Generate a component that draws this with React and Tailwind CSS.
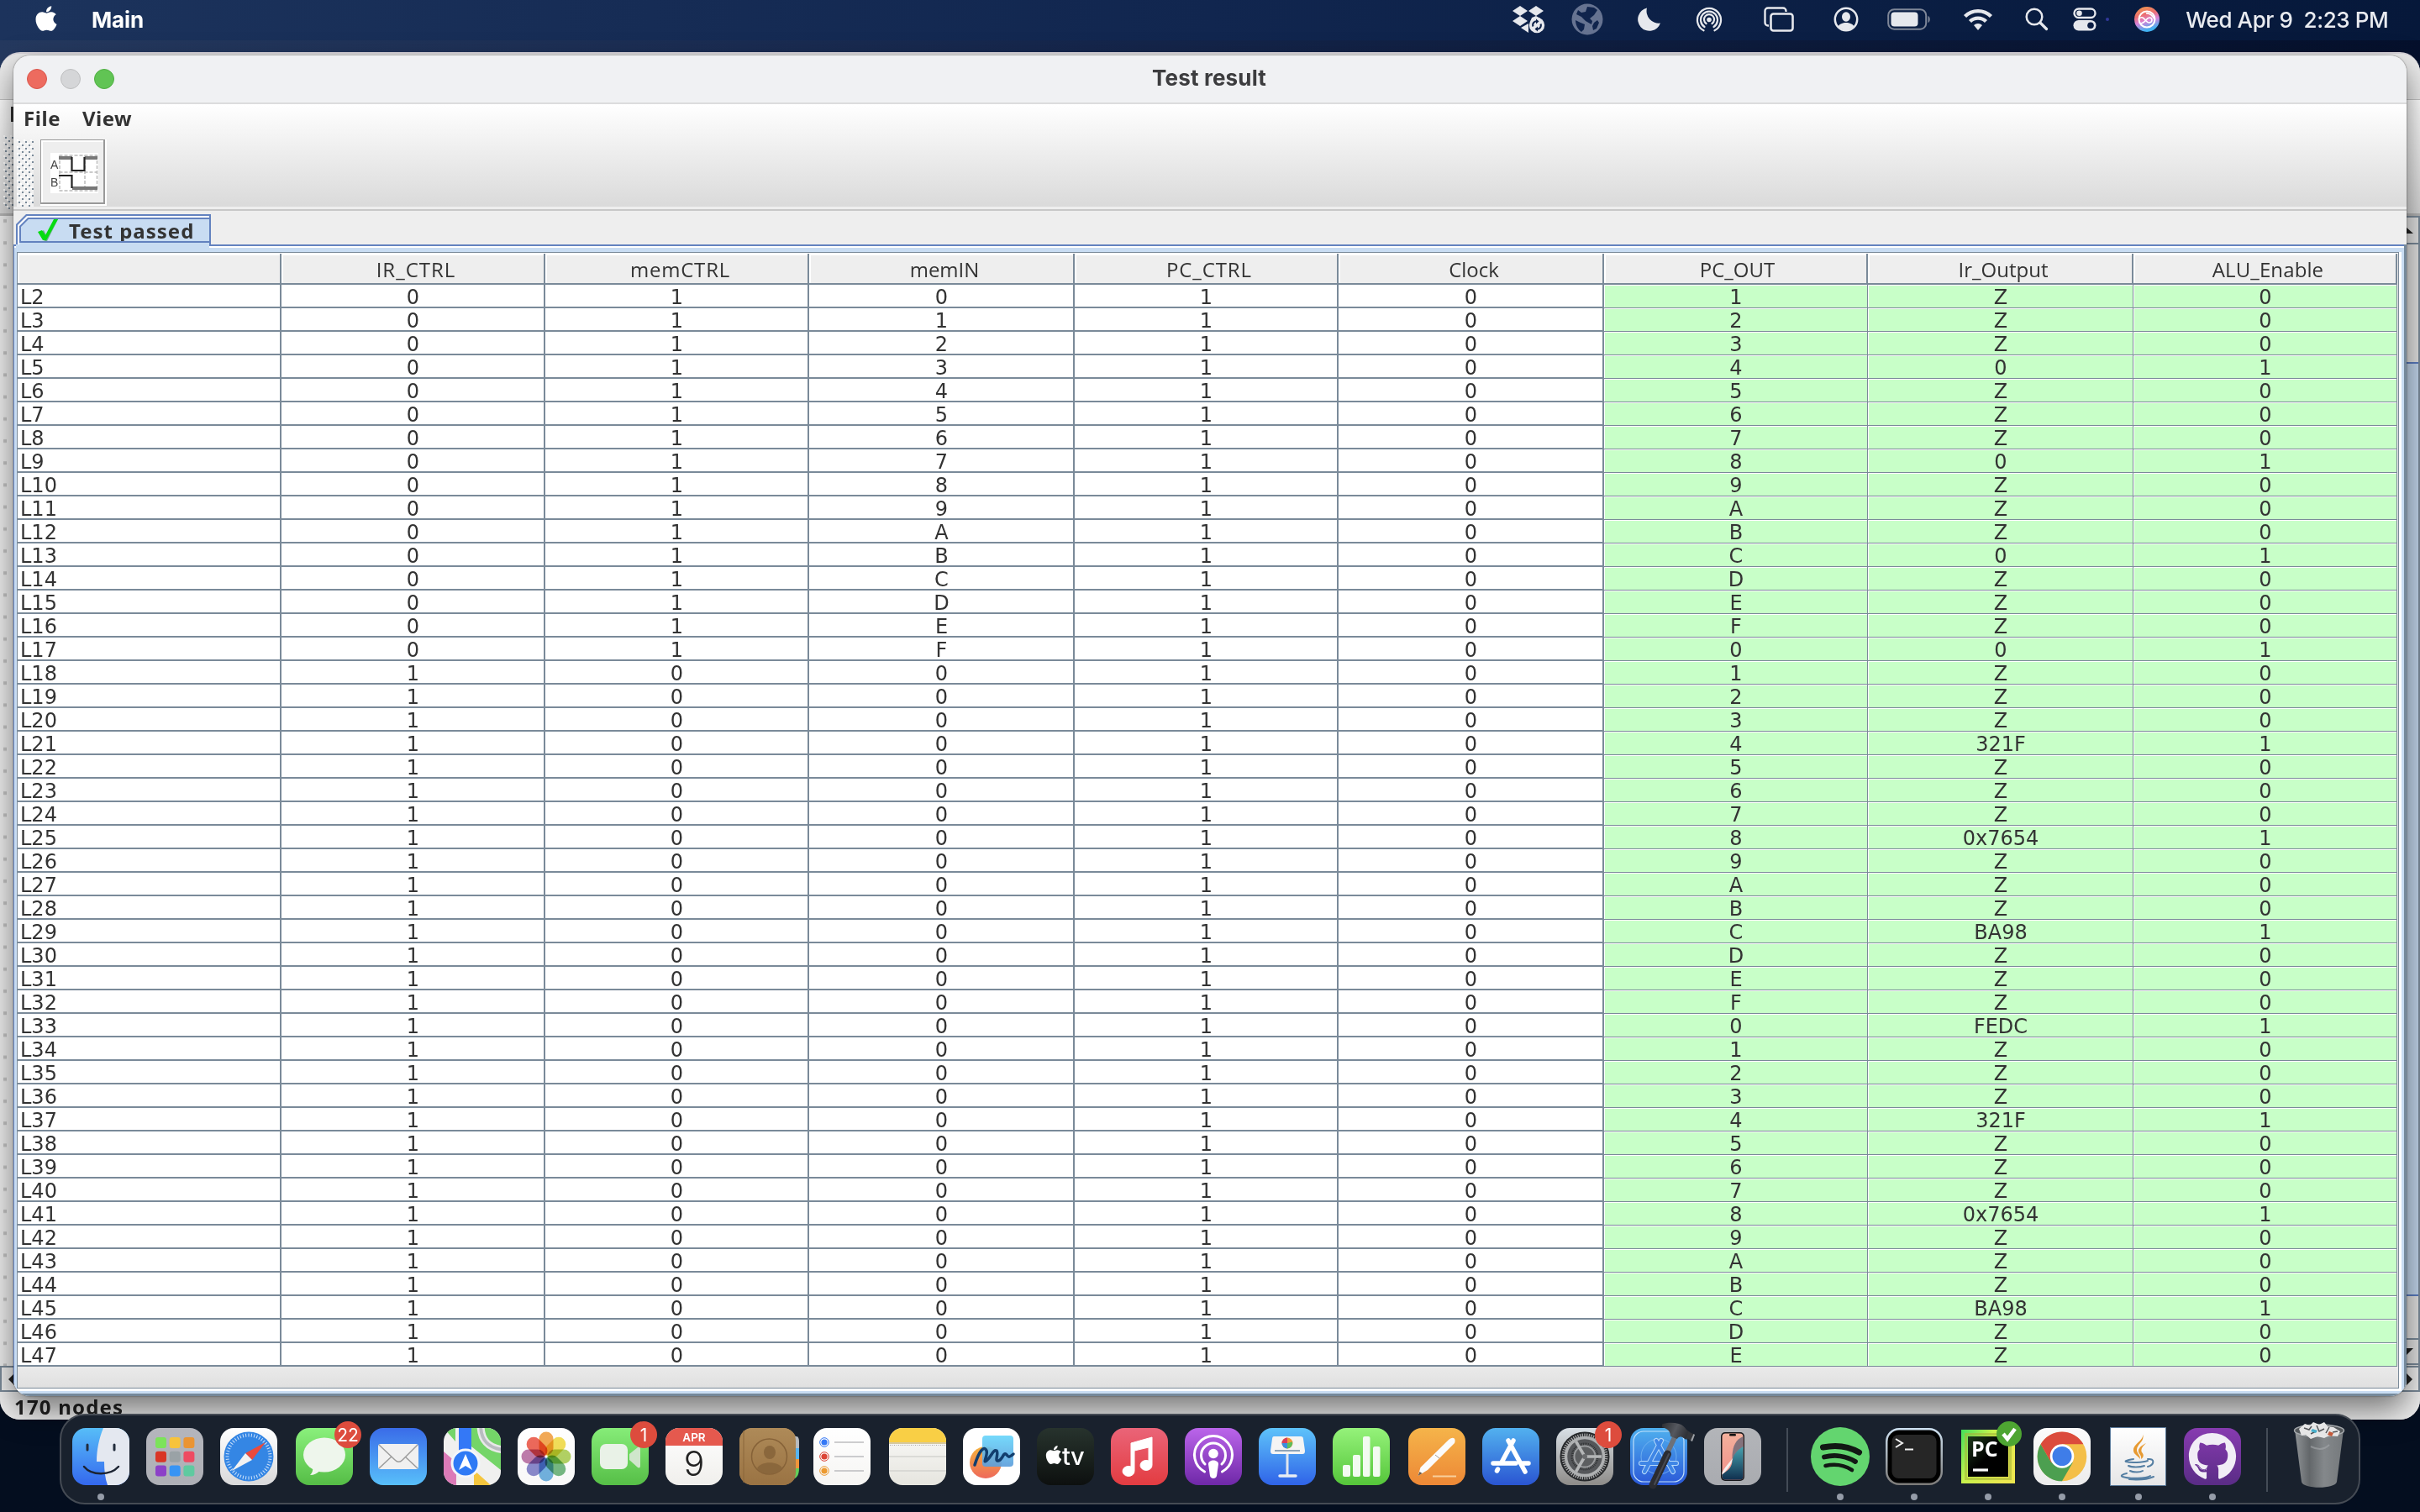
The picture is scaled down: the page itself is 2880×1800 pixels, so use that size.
import React from "react";
import { FaApple, FaGithub } from "react-icons/fa";

const COLS = [
  { name: "", w: "w-[314px]", t: "" },
  { name: "IR_CTRL", w: "w-[314px]", t: "pl-[8px] tracking-[1px]" },
  { name: "memCTRL", w: "w-[314px]", t: "pl-[9px] tracking-[0.8px]" },
  { name: "memIN", w: "w-[316px]", t: "pl-[8px]" },
  { name: "PC_CTRL", w: "w-[314px]", t: "pl-[8px] tracking-[0.9px]" },
  { name: "Clock", w: "w-[316px]", t: "pl-[8px]" },
  { name: "PC_OUT", w: "w-[314px]", t: "pl-[5px]" },
  { name: "Ir_Output", w: "w-[316px]", t: "pl-[8px]" },
  { name: "ALU_Enable", w: "w-[314px]", t: "pl-[8px] tracking-[0.1px]" },
];

const IR = { 5: "0", 9: "0", 13: "0", 17: "0", 21: "321F", 25: "0x7654", 29: "BA98", 33: "FEDC", 37: "321F", 41: "0x7654", 45: "BA98" };
const hex = (n) => (n & 15).toString(16).toUpperCase();
const ROWS = Array.from({ length: 46 }, (_, k) => {
  const n = k + 2;
  const early = n <= 17;
  return [
    "L" + n,
    early ? "0" : "1",
    early ? "1" : "0",
    early ? hex(n - 2) : "0",
    "1",
    "0",
    hex(n - 1),
    IR[n] || "Z",
    IR[n] ? "1" : "0",
  ];
});

/* ---------- menu bar ---------- */

function MenuSvg({ w, h, className, children }) {
  return (
    <svg width={w} height={h} viewBox={`0 0 ${w} ${h}`} className={"shrink-0 " + className} fill="none" stroke="#e6e8ed">
      {children}
    </svg>
  );
}

function MenuBar() {
  return (
    <div className="flex h-12 w-full shrink-0 items-center bg-linear-to-r from-[#1c335c] via-[#11264f] to-[#06183a] pb-[2px] font-[Inter,sans-serif] text-[26px]">
      <FaApple className="ml-[38px] size-[34px] -translate-y-px text-white" />
      <span className="ml-[37px] font-bold tracking-[-0.1px] text-white">Main</span>
      <div className="ml-[1628px] flex h-full items-center">
        <MenuSvg w={40} h={34} className="">
          <g fill="#e6e8ed" stroke="none">
            <path d="M10 1l9 6-9 6-9-6zM29 1l9 6-9 6-9-6zM10 13l9 6-9 6-9-6zM20 22l-9 5 9 6z M24 15l5-2 7 4a11 11 0 0 0-14 3z" />
            <circle cx="30" cy="24" r="9.200" />
          </g>
          <path d="M25.500 25.500a4.500 4.500 0 0 1 5.500-6M34.500 22.500a4.500 4.500 0 0 1-5.500 6" stroke="#0d2148" strokeWidth="2" />
          <path d="M29 16.500l3.500 3-3.500 3zM31 31.500l-3.500-3 3.500-3z" fill="#0d2148" stroke="none" />
        </MenuSvg>
        <MenuSvg w={38} h={38} className="ml-[31px]">
          <circle cx="19" cy="19" r="18.500" fill="#667391" stroke="none" />
          <path d="M19 4l8 1 4 3-4 6-5 4 3 3-1 4-7-4-5-5-6-3 2-5 4 3 5-1zM5 20l6 3 5 2-1 6-3 3c-4-3-7-8-7-14zM27 23l4-3 2 3-3 7-4 2-1-5z" fill="#10244d" stroke="none" />
        </MenuSvg>
        <MenuSvg w={30} h={30} className="ml-[40px]">
          <path d="M12 1.500a13.800 13.800 0 1 0 16 18A14.500 14.500 0 0 1 12 1.500z" fill="#e6e8ed" stroke="none" />
        </MenuSvg>
        <MenuSvg w={32} h={30} className="ml-[40px]">
          <g strokeWidth="2.200" strokeLinecap="round">
            <path d="M9.500 28.300a14 14 0 1 1 13 0" />
            <path d="M10.500 24a10 10 0 1 1 11 0" />
            <path d="M12.500 20a6 6 0 1 1 7 0" />
          </g>
          <circle cx="16" cy="15.500" r="2.800" fill="#e6e8ed" stroke="none" />
        </MenuSvg>
        <MenuSvg w={36} h={30} className="ml-[49px]">
          <path d="M6 22.500H5a3.500 3.500 0 0 1-3.500-3.500V5A3.500 3.500 0 0 1 5 1.500h18A3.500 3.500 0 0 1 26.500 5v1" strokeWidth="2.400" />
          <rect x="8.500" y="8.500" width="26" height="20" rx="3" strokeWidth="2.600" />
        </MenuSvg>
        <MenuSvg w={30} h={30} className="ml-[47px]">
          <circle cx="15" cy="15" r="13.200" strokeWidth="2.500" />
          <g fill="#e6e8ed" stroke="none">
            <ellipse cx="15" cy="12" rx="5" ry="5.700" />
            <path d="M5.500 23.500c3-6 16-6 19 0-4 5.500-15 5.500-19 0z" />
          </g>
        </MenuSvg>
        <MenuSvg w={52} h={26} className="ml-[34px]">
          <rect x="1.200" y="1.200" width="45" height="23.500" rx="7" stroke="#7f8798" strokeWidth="2" />
          <rect x="4.500" y="4.500" width="32" height="17" rx="4" fill="#e6e8ed" stroke="none" />
          <path d="M48.500 9c3 1 3 7 0 8z" fill="#7f8798" stroke="none" />
        </MenuSvg>
        <MenuSvg w={36} h={28} className="ml-[38px]">
          <g strokeWidth="4.400">
            <path d="M2.500 10.500a22 22 0 0 1 31 0" />
            <path d="M8.500 16.500a13.500 13.500 0 0 1 19 0" />
          </g>
          <path d="M18 27l-5-6a7.500 7.500 0 0 1 10 0z" fill="#e6e8ed" stroke="none" />
        </MenuSvg>
        <MenuSvg w={28} h={28} className="ml-[38px]">
          <circle cx="11" cy="11" r="9.300" strokeWidth="2.500" />
          <path d="M18 18l7.500 7.500" strokeWidth="3.200" strokeLinecap="round" />
        </MenuSvg>
        <MenuSvg w={28} h={28} className="ml-[29px]">
          <rect x="1.500" y="1.500" width="25" height="10.500" rx="5.200" strokeWidth="2.400" />
          <circle cx="7.500" cy="6.700" r="3.300" fill="#e6e8ed" stroke="none" />
          <rect x="0.500" y="15" width="27" height="12.500" rx="6.200" fill="#e6e8ed" stroke="none" />
          <circle cx="21" cy="21.200" r="3.800" fill="#0a1c42" stroke="none" />
        </MenuSvg>
        <span className="ml-[11px] size-1 rounded-full bg-[#31389a]" />
        <MenuSvg w={30} h={30} className="ml-[30px]">
          <defs>
            <linearGradient id="siri" x1="0" y1="0" x2="0.300" y2="1">
              <stop offset="0" stopColor="#f0a04a" />
              <stop offset="0.400" stopColor="#ec6f70" />
              <stop offset="0.650" stopColor="#d982d8" />
              <stop offset="1" stopColor="#3fb2f2" />
            </linearGradient>
          </defs>
          <circle cx="15" cy="15" r="15" fill="url(#siri)" stroke="none" />
          <circle cx="15" cy="15" r="9.500" stroke="#fff" strokeWidth="2" />
          <path d="M6 14c5-5 8 6 12 5s4-6 0-6-5 7-11 7M14 8c5-1 8 3 10 7" stroke="#fff" strokeWidth="1.600" />
        </MenuSvg>
        <span className="ml-[31px] whitespace-pre font-medium tracking-[-0.4px] text-[#e9ebf0]">Wed Apr 9  2:23 PM</span>
      </div>
    </div>
  );
}

/* ---------- window pieces ---------- */

function Gripper({ w, h }) {
  return (
    <svg width={w} height={h} className="block shrink-0">
      <defs>
        <pattern id={"bump" + w} width="8" height="8" patternUnits="userSpaceOnUse">
          <path d="M0 0h2v2H0zM4 4h2v2H4z" fill="#fff" />
          <path d="M2 2h2v2H2zM6 6h2v2H6z" fill="#7a8a99" />
        </pattern>
      </defs>
      <rect width={w} height={h} fill={`url(#bump${w})`} />
    </svg>
  );
}

function BackWindow() {
  return (
    <div className="absolute left-0 top-[62px] flex h-[1628px] w-[2880px] flex-col overflow-hidden rounded-[24px] border-t-2 border-[#d8d4da] bg-[#eee]">
      <div className="h-[54px] shrink-0 bg-[#eaeaea]" />
      <div className="flex h-[136px] shrink-0 flex-col border-t border-[#c4c4c4] bg-linear-to-b from-white to-[#d6d6d6]">
        <span className="ml-[13px] mt-[8px] h-[18px] w-1 bg-[#333]" />
        <div className="ml-1 mt-[16px]">
          <Gripper w={12} h={88} />
        </div>
      </div>
      <div className="h-[3px] shrink-0 bg-[#b5b5b5]" />
      <div className="flex h-[1369px] shrink-0 justify-between">
        <svg width="16" height="1369" className="block">
          <defs>
            <pattern id="griddots" width="16" height="26.200" patternUnits="userSpaceOnUse">
              <rect x="4" y="4" width="4" height="4" fill="#c4c4c4" />
            </pattern>
          </defs>
          <rect width="16" height="1369" fill="url(#griddots)" />
        </svg>
        <div className="flex w-[18px] flex-col border-r-2 border-[#7a8a99] bg-[#e2e2e2]">
          <div className="flex h-[34px] items-center border-y-2 border-[#7a8a99]">
            <svg width="12" height="8"><path d="M1 0l9 8H0z" fill="#222" /></svg>
          </div>
          <div className="h-[140px]" />
          <div className="h-[1112px] border-y-2 border-[#5a7cc0] bg-[#c2d6ec]" />
          <div className="h-[50px]" />
          <div className="flex h-[32px] items-center border-y-2 border-[#7a8a99]">
            <svg width="12" height="8"><path d="M0 0h10l-8 8H0z" fill="#222" /></svg>
          </div>
        </div>
      </div>
      <div className="flex h-[31px] shrink-0 items-center justify-between border-2 border-[#7a8a99] bg-[#eee]">
        <svg width="14" height="14" className="ml-[8px]"><path d="M7 0L0 7l7 7z" fill="#222" /></svg>
        <svg width="14" height="14"><path d="M0 0l7 7-7 7z" fill="#222" /></svg>
      </div>
      <div className="flex flex-1 items-center bg-[#ececec] pl-[17px] pt-[2px]">
        <span className="whitespace-nowrap font-['Noto_Sans',sans-serif] text-[24px] font-bold leading-[30px] tracking-[1.2px] text-[#222]">170 nodes</span>
      </div>
    </div>
  );
}

function WaveIcon() {
  return (
    <svg width="57" height="48" viewBox="0 0 57 48" className="block bg-white">
      <g stroke="#bbb" strokeWidth="1.500" strokeDasharray="4 2" fill="none">
        <path d="M10.500 3H56M10.500 23H56M10.500 45H56M11 3v42M41 3v42M55.500 3v42" />
      </g>
      <path d="M10 6h16M41 6h15M26 42h30" stroke="#777" strokeWidth="4" />
      <path d="M25.500 5v16h15V5M10 27h15.500v15" fill="none" stroke="#222" strokeWidth="2.200" />
      <g fill="#444" className="font-['Liberation_Sans',sans-serif] text-[14px]">
        <text x="0" y="19">A</text>
        <text x="0" y="40">B</text>
      </g>
    </svg>
  );
}

function FrontWindow() {
  return (
    <div className="absolute left-[16px] top-[66px] flex h-[1596px] w-[2848px] flex-col overflow-hidden rounded-[20px] bg-[#eee] shadow-[0_0_2px_rgba(0,0,0,0.6),0_16px_36px_rgba(0,0,0,0.5)]">
      <div className="flex h-[58px] shrink-0 items-center border-b-2 border-[#dcdcdd] bg-[#f0f1f3]">
        <div className="ml-[16px] flex w-[104px] gap-4">
          <span className="size-6 rounded-full border border-[#d9564c] bg-[#ed6b5f]" />
          <span className="size-6 rounded-full border border-[#bdbebf] bg-[#d5d6d8]" />
          <span className="size-6 rounded-full border border-[#4fae42] bg-[#61c454]" />
        </div>
        <span className="w-[2606px] pb-[3px] text-center font-[Inter,sans-serif] text-[26px] font-bold leading-none tracking-[0.15px] text-[#3d3d3f]">Test result</span>
      </div>
      <div className="flex h-[122px] shrink-0 flex-col bg-linear-to-b from-white to-[#dadada]">
        <div className="flex h-[42px] pl-[12px] font-['Noto_Sans',sans-serif] text-[24px] font-bold leading-[33px] text-[#333]">
          <span className="w-[70px] tracking-[0.6px]">File</span>
          <span className="tracking-[0.5px]">View</span>
        </div>
        <div className="flex">
          <div className="ml-[4px] bg-[#f1f1f1]">
            <Gripper w={20} h={80} />
          </div>
          <div className="ml-[8px] h-[79px] w-[79px] border-b-3 border-r-3 border-white">
            <div className="h-[77px] w-[77px] border-b-2 border-l border-r-2 border-t border-[#999]">
              <div className="flex h-full w-full border-l-2 border-t-2 border-white bg-[#eee] pl-[9px] pt-[13px]">
                <WaveIcon />
              </div>
            </div>
          </div>
        </div>
      </div>
      <div className="h-[5px] shrink-0 border-b-2 border-[#c8c8c8] bg-[#eee]" />
      <div className="flex h-[40px] shrink-0 items-end bg-[#eee] pt-[4px]">
        <div className="ml-[3px] h-[36px] w-[232px] bg-[#6382bf] pl-[2px] pr-[2px] pt-[2px] [clip-path:polygon(12px_0,100%_0,100%_100%,0_100%,0_12px)]">
          <div className="h-full bg-white pl-[2px] pt-[2px] [clip-path:polygon(11px_0,100%_0,100%_100%,0_100%,0_11px)]">
            <div className="h-full bg-[#c8dcf2] [clip-path:polygon(10px_0,100%_0,100%_100%,0_100%,0_10px)]">
              <div className="h-[30px] bg-[#6382bf] p-[2px] pr-0 [clip-path:polygon(10px_0,100%_0,100%_100%,0_100%,0_10px)]">
                <div className="flex h-[26px] items-center bg-[#c8dcf2] [clip-path:polygon(9px_0,100%_0,100%_100%,0_100%,0_9px)]">
                  <svg width="26" height="28" viewBox="0 0 26 28" className="ml-[20px] shrink-0">
                    <path d="M3 17l4-3 3 6L20 1h4L11 27H8z" fill="#0a7d18" opacity="0.500" />
                    <path d="M0 16l5-2 4 6L19 1h5L10 26H6z" fill="#06dc10" />
                  </svg>
                  <span className="ml-[11px] whitespace-nowrap pt-px font-['Noto_Sans',sans-serif] text-[24px] font-bold leading-[26px] tracking-[1px] text-[#333]">Test passed</span>
                </div>
              </div>
            </div>
          </div>
        </div>
      </div>
      <div className="flex min-h-0 flex-1 flex-col border-b-3 border-l border-r-3 border-[#6382bf] border-b-[#75899b] border-r-[#75899b] bg-[#c8dcf2]">
        <div className="flex h-[4px] shrink-0">
          <div className="w-[2px] border-b-2 border-t-2 border-b-white border-t-[#6382bf]" />
          <div className="w-[230px] bg-[#c8dcf2]" />
          <div className="flex-1 border-b-2 border-t-2 border-b-white border-t-[#6382bf]" />
        </div>
        <div className="ml-[3px] mr-[3px] mt-[5px] flex h-[1356px] shrink-0 flex-col border-b-3 border-r-3 border-white">
          <div className="flex h-[1353px] flex-col border border-[#7a8a99] bg-[#ececec]">
            <div className="flex h-[38px] shrink-0 border-t border-white">
              {COLS.map((c, i) => (
                <div
                  key={i}
                  className={
                    "flex shrink-0 justify-center border-b-2 border-r-2 border-[#7a8a99] bg-[#eee] font-['Open_Sans',sans-serif] text-[24px] leading-[38px] text-[#333] shadow-[inset_2px_2px_0_#fff] " + c.w + " " + c.t
                  }
                >
                  {c.name}
                </div>
              ))}
            </div>
            {ROWS.map((r, k) => (
              <div key={k} className="flex h-[28px] shrink-0 font-['DejaVu_Sans',sans-serif] text-[24px] leading-[31px] text-[#333]">
                {r.map((v, i) => (
                  <div
                    key={i}
                    className={
                      (i < 6
                        ? "shrink-0 border-b-2 border-r-2 border-[#7a8a99] bg-white "
                        : "shrink-0 border-b border-r border-[#7a8a99] bg-[#c8ffc8] shadow-[inset_1px_1px_0_#fff] ") +
                      (i === 0 ? "pl-[3px] " : "pl-[1px] text-center ") +
                      COLS[i].w
                    }
                  >
                    {v}
                  </div>
                ))}
              </div>
            ))}
            <div className="flex-1 bg-linear-to-b from-[#eaeaea] to-[#e0e0e0]" />
          </div>
        </div>
      </div>
    </div>
  );
}

/* ---------- dock ---------- */

function Grad({ id, a, b }) {
  return (
    <linearGradient id={id} x1="0" y1="0" x2="0" y2="1">
      <stop offset="0" stopColor={a} />
      <stop offset="1" stopColor={b} />
    </linearGradient>
  );
}

function Tile({ id, a, b, className = "", badge, dot, children, w = 68 }) {
  return (
    <div className={"relative flex h-[107px] shrink-0 flex-col items-center pt-[16px] " + className}>
      <svg width={w} height="68" viewBox={`0 0 ${w} 68`} className="block shrink-0 overflow-visible">
        {a && (
          <>
            <defs>
              <Grad id={id} a={a} b={b || a} />
              <clipPath id={id + "c"}>
                <rect width="68" height="68" rx="16" />
              </clipPath>
            </defs>
            <rect width="68" height="68" rx="16" fill={`url(#${id})`} />
          </>
        )}
        {children}
      </svg>
      {badge && (
        <span className="absolute right-[-10px] top-[8px] flex size-8 items-center justify-center rounded-full bg-[#dd4c3d] font-[Inter,sans-serif] text-[21px] leading-none text-white">
          {badge}
        </span>
      )}
      {dot && <span className="mt-[10px] size-2 rounded-full bg-[#959ca8]" />}
    </div>
  );
}

const PAD = ["#7ce35a", "#f7c33c", "#ea9433", "#d93526", "#9aa2a6", "#ee4b62", "#8c41c8", "#3794f4", "#5fcaa0"];
const PETALS = ["#f09a37", "#f0d83c", "#a6cc48", "#5fae6e", "#5aa6dc", "#7676c4", "#b4659e", "#ea4f3e"];
const ticks = (n) => Array.from({ length: n }, (_, i) => (i * 360) / n);

function Dock() {
  return (
    <div className="absolute left-[71px] top-[1683px] flex h-[108px] w-[2738px] rounded-[30px] border-2 border-[#454b54] bg-[#19212d] pl-[13px]">
      <div className="-mt-[1px] flex">
        <Tile id="finder" a="#57bdf8" b="#3468ee" dot>
          <g clipPath="url(#finderc)">
            <path d="M37 0c-5 12-8 26-8 40h9c0 10 1 20 4 28h26V0z" fill="#e4e8f0" />
          </g>
          <path d="M18 20v6M50 20v6" stroke="#222c3c" strokeWidth="3" strokeLinecap="round" />
          <path d="M14 46c9 11 31 11 41 0" fill="none" stroke="#1c2433" strokeWidth="2.500" strokeLinecap="round" />
        </Tile>
        <Tile id="launch" a="#b4b5bc" b="#aeb0b6" className="ml-5">
          {PAD.map((c, i) => (
            <rect key={i} x={11 + (i % 3) * 16.700} y={11 + Math.floor(i / 3) * 16.700} width="13" height="13" rx="3" fill={c} />
          ))}
        </Tile>
        <Tile id="safari" a="#ffffff" b="#d9d9da" className="ml-5">
          <circle cx="34" cy="34" r="29.500" fill="#3486e4" />
          {ticks(48).map((d) => (
            <path key={d} d="M34 6.500v4" stroke="#cfe3fb" strokeWidth="1" transform={`rotate(${d} 34 34)`} />
          ))}
          <path d="M54 17L38 38l-8-8z" fill="#ea4a3c" />
          <path d="M14 51l16-21 8 8z" fill="#f2f2f2" />
        </Tile>
        <Tile id="messages" a="#8af07c" b="#55bd46" className="ml-[22px]" badge="22">
          <ellipse cx="34" cy="32" rx="25" ry="20.500" fill="#eef6ec" />
          <path d="M20 46c1 5-1 8-3 10 5 0 9-2 12-6z" fill="#eef6ec" />
        </Tile>
        <Tile id="mail" a="#3a6ce8" b="#58bffa" className="ml-5">
          <rect x="10" y="19" width="48" height="30" rx="3" fill="#f0f0f0" />
          <path d="M11 20l19 18c3 3 6 3 9 0l18-18M11 48l15-14M57 48L42 34" fill="none" stroke="#9c9c9c" strokeWidth="1.500" />
        </Tile>
        <Tile id="maps" a="#f0f0ef" className="ml-5">
          <g clipPath="url(#mapsc)">
            <path d="M0 0h14v16zM33 0h35v50L33 22z" fill="#74d568" />
            <path d="M0 28l15 13v27H0z" fill="#dc7bb8" />
            <path d="M36 50l20 18H36z" fill="#f5c63e" />
            <path d="M18 0h15v34H18z" fill="#3478f6" />
            <path d="M44-4c0 18 8 28 28 30" fill="none" stroke="#e8e8e8" strokeWidth="9" />
            <path d="M44-4c0 18 8 28 28 30" fill="none" stroke="#b9bcc0" strokeWidth="4" />
          </g>
          <circle cx="26" cy="42" r="16" fill="#2f7af5" stroke="#f4f6fa" strokeWidth="3" />
          <path d="M26 31l8 19-8-5-8 5z" fill="#fff" />
        </Tile>
        <Tile id="photos" a="#ffffff" b="#f8f8f8" className="ml-5">
          {PETALS.map((c, i) => (
            <rect key={c} x="25.500" y="4.500" width="17" height="28" rx="8.500" fill={c} opacity="0.850" transform={`rotate(${i * 45} 34 34)`} className="mix-blend-multiply" />
          ))}
        </Tile>
        <Tile id="facetime" a="#86ec78" b="#56bf47" className="ml-5" badge="1">
          <rect x="10" y="19" width="33" height="30" rx="7" fill="#e9f2e7" />
          <path d="M45 31l10-8c2-1 3 0 3 2v20c0 2-1 3-3 2l-10-9z" fill="#cfe6cb" />
        </Tile>
        <Tile id="cal" a="#ffffff" b="#f0efec" className="ml-5">
          <g clipPath="url(#calc)">
            <rect width="68" height="21" fill="#e5594e" />
          </g>
          <text x="34" y="16" textAnchor="middle" fill="#fff" className="font-[Inter,sans-serif] text-[13.500px] font-semibold">APR</text>
          <text x="34" y="57" textAnchor="middle" fill="#222" className="font-[Inter,sans-serif] text-[41px] font-light">9</text>
        </Tile>
        <Tile id="contacts" a="#ae8a58" b="#9a7343" className="ml-5">
          <path d="M64 10h4c2 0 3 3 3 6v9h-5z" fill="#b9bcc0" />
          <path d="M66 24h5v13h-5z" fill="#57b4f0" />
          <path d="M66 37h5v11h-5z" fill="#f0953a" />
          <path d="M66 48h5c0 7-2 10-5 12z" fill="#62cf5b" />
          <rect width="67" height="68" rx="15" fill="url(#contacts)" />
          <path d="M5 3v62" stroke="#8a673b" strokeWidth="1" />
          <circle cx="35.500" cy="34" r="21" fill="none" stroke="#866238" strokeWidth="1.500" />
          <ellipse cx="36" cy="29" rx="7" ry="8" fill="#8a673c" />
          <path d="M21 48c4-9 26-9 30 0-8 9-22 9-30 0z" fill="#8a673c" />
        </Tile>
        <Tile id="rem" a="#ffffff" b="#f6f5f3" className="ml-5">
          {["#3478f6", "#dc4436", "#ec9a31"].map((c, i) => (
            <g key={c}>
              <circle cx="13" cy={17 + i * 17} r="5.300" fill="none" stroke={c} strokeWidth="1" />
              <circle cx="13" cy={17 + i * 17} r="3.600" fill={c} />
              <path d={`M25 ${17 + i * 17}h35`} stroke="#bcbcbf" strokeWidth="1.500" />
            </g>
          ))}
        </Tile>
        <Tile id="notes" a="#fafaf8" b="#e6e5df" className="ml-[22px]">
          <g clipPath="url(#notesc)">
            <rect width="68" height="17" fill="#f9cf45" />
          </g>
          <path d="M0 18h68" stroke="#b79c4a" strokeWidth="1" />
          <path d="M1 20.500h66" stroke="#aaa" strokeWidth="1" strokeDasharray="1 1.500" />
          <path d="M0 34h68M0 51h68" stroke="#d3d3d0" strokeWidth="1.500" />
        </Tile>
        <Tile id="free" a="#ffffff" className="ml-5">
          <defs>
            <Grad id="freeo" a="#f6b23e" b="#ee6a5b" />
            <Grad id="freeb" a="#69d6fb" b="#5d9edb" />
          </defs>
          <circle cx="27" cy="41" r="19" fill="url(#freeo)" />
          <rect x="23" y="9" width="37" height="37" rx="4" fill="url(#freeb)" opacity="0.920" />
          <path d="M14 44c5-16 11-24 14-17 2 5-5 16 0 12 6-5 8-14 12-12 3 3-3 13 2 12s6-10 9-8 2 6 9 0" fill="none" stroke="#123e6e" strokeWidth="3.500" strokeLinecap="round" />
        </Tile>
        <Tile id="tv" a="#27332d" b="#0d100f" className="ml-5">
          <FaApple size={25} x="7.500" y="19.500" color="#fff" />
          <text x="30" y="44" fill="#fff" className="font-[Inter,sans-serif] text-[29px] font-medium tracking-[-0.5px]">tv</text>
        </Tile>
        <Tile id="music" a="#ea6478" b="#e33c41" className="ml-5">
          <path d="M24 18l25-7v33a7 6 0 1 1-4-5V23l-17 4v24a7 6 0 1 1-4-5z" fill="#fff" stroke="#fff" strokeWidth="1" strokeLinejoin="round" />
        </Tile>
        <Tile id="pod" a="#bb65ea" b="#6f28a8" className="ml-5">
          <g fill="none" stroke="#fff" strokeWidth="3" strokeLinecap="round">
            <path d="M23.500 52a22.500 22.500 0 1 1 21 0" />
            <path d="M24 43a14.500 14.500 0 1 1 20 0" />
          </g>
          <circle cx="34" cy="30.500" r="5.800" fill="#fff" />
          <path d="M28 43c0-6 12-6 12 0l-2 14c-1 4-7 4-8 0z" fill="#fff" />
        </Tile>
        <Tile id="key" a="#5ec3fa" b="#2f63e8" className="ml-5">
          <path d="M18 10h32c2 0 3 1 3 3l2 14c0 3-1 4-3 4H17c-2 0-3-1-3-4l2-14c0-2 1-3 2-3z" fill="#f4f4f4" />
          <path d="M19 27h30" stroke="#8ea4b8" strokeWidth="2" />
          <circle cx="34" cy="18" r="6.500" fill="#f1973b" />
          <path d="M34 11.500a6.500 6.500 0 0 0-6.500 6.500h6.500z" fill="#d63f5c" />
          <path d="M27.500 18a6.500 6.500 0 0 0 6.500 6.500V18z" fill="#3a8de0" />
          <path d="M34 24.500a6.500 6.500 0 0 0 6-8L34 18z" fill="#5cbf5c" />
          <path d="M34 31v26" stroke="#dfe5ee" strokeWidth="3" />
          <path d="M25 57h19" stroke="#e8edf4" strokeWidth="3.500" strokeLinecap="round" />
        </Tile>
        <Tile id="num" a="#95f27a" b="#55c63a" className="ml-5">
          <g fill="#f3fbf1">
            <rect x="12" y="44" width="9" height="14" rx="2" />
            <rect x="24" y="32" width="9" height="26" rx="2" />
            <rect x="36" y="10" width="8.500" height="48" rx="2" />
            <rect x="48" y="22" width="8.500" height="36" rx="2" />
          </g>
        </Tile>
        <Tile id="pages" a="#f5b44a" b="#ed8836" className="ml-[22px]">
          <path d="M29 57.500h28" stroke="#f8cf9c" strokeWidth="2" />
          <path d="M11.500 57l3-10L48 14c6-5 9-1 7 4L23 50z" fill="#fbfbfb" />
          <path d="M32 32l5 4" stroke="#a59a8d" strokeWidth="1" />
          <path d="M11.500 57l2-5 3 2z" fill="#6c5a48" />
        </Tile>
        <Tile id="store" a="#52b1ef" b="#2a55d2" className="ml-5">
          <g stroke="#fff" strokeWidth="5.500" strokeLinecap="round">
            <path d="M37 15L23 41M31 15l20 37M13 42h27M48 42h7M17.500 51l1-2" />
          </g>
        </Tile>
        <Tile id="sys" a="#d9e0e6" b="#8e8c89" className="ml-5" badge="1">
          <circle cx="34" cy="34" r="29.500" fill="#26282a" />
          {ticks(60).map((d) => (
            <path key={d} d="M34 6.500v4" stroke="#a9aaab" strokeWidth="1.300" transform={`rotate(${d} 34 34)`} />
          ))}
          <circle cx="34" cy="34" r="22.500" fill="#55575a" stroke="#aeb0b1" strokeWidth="3.500" />
          <circle cx="34" cy="34" r="15" fill="#6a6c6e" stroke="#303234" strokeWidth="3" strokeDasharray="1 1" />
          <circle cx="34" cy="34" r="12.500" fill="#5c5e60" stroke="#97999b" strokeWidth="2" />
          <path d="M34 34h20M34 34L23.500 16M34 34L23.500 52" stroke="#b4b6b7" strokeWidth="3.500" />
          <circle cx="34" cy="34" r="3" fill="#6a6c6e" />
        </Tile>
        <Tile id="xcode" a="#4fb0ee" b="#2a58d8" className="ml-5">
          <defs>
            <linearGradient id="steel" x1="0" y1="0" x2="1" y2="0.300">
              <stop offset="0" stopColor="#2a2c31" />
              <stop offset="0.550" stopColor="#55585f" />
              <stop offset="1" stopColor="#2f3136" />
            </linearGradient>
          </defs>
          <rect x="4" y="4" width="60" height="60" rx="12" fill="none" stroke="#c0dffa" strokeWidth="1.200" />
          <circle cx="34" cy="34" r="21" fill="none" stroke="#78b8f3" strokeWidth="0.800" />
          <g stroke="#b4d8fa" strokeWidth="6" strokeLinecap="round">
            <path d="M37 15L17 52M31 15l20 37M13 42h42" />
          </g>
          <g stroke="#3f86e6" strokeWidth="4" strokeLinecap="round">
            <path d="M37 15L17 52M31 15l20 37M13 42h42" />
          </g>
          <path d="M54 9L43.500 31" stroke="#6d7178" strokeWidth="6" />
          <path d="M44.500 31L27 68" stroke="#2b2c32" strokeWidth="9" strokeLinecap="round" />
          <path d="M46 31L29 67" stroke="#484a52" strokeWidth="2" strokeLinecap="round" />
          <path d="M38-4.500c5-2 13-2.500 20-.5 4 1 7 4 9 7l4 3-4 9-5-3c-3-1-5 0-6 2l-8-3c0-6-3-9-10-11z" fill="url(#steel)" />
          <path d="M69 4l8 4-3 8-7-4z" fill="#33353a" />
          <path d="M75.500 7l1.500 1-3 8-2-1z" fill="#9da1a7" />
        </Tile>
        <Tile id="phone" a="#b3b5b9" b="#a9abb0" className="ml-5">
          <defs>
            <Grad id="phonew" a="#f4b09c" b="#f3908a" />
            <Grad id="phoneb" a="#47a3b0" b="#10304f" />
          </defs>
          <rect x="20" y="5" width="28" height="58" rx="5" fill="#17181b" />
          <rect x="21.500" y="6.500" width="25" height="55" rx="4" fill="url(#phonew)" />
          <path d="M46.500 10c-9 4-12 11-13 22v8l13-15z" fill="#84727c" />
          <path d="M34 36c-1 8-7 14-12.500 20v-3c4-8 9-12 12.500-17z" fill="#f6eeee" />
          <path d="M46.500 22c-8 5-12 10-13 18-1 9-7 11-12 15.500v2a4 4 0 0 0 4 4h17a4 4 0 0 0 4-4z" fill="url(#phoneb)" />
          <rect x="30" y="7" width="8" height="2.500" rx="1.200" fill="#111" />
        </Tile>
        <div className="ml-[30px] mt-[16px] h-[76px] w-[2px] bg-[#434b56]" />
        <Tile w={70} className="ml-[27px]" dot>
          <circle cx="35" cy="34" r="35" fill="#63d56f" />
          <g fill="none" stroke="#121814" strokeLinecap="round">
            <path d="M14.500 23c14-3 30-1.500 43 6" strokeWidth="7" />
            <path d="M16 34.500c12-3 26-1.500 37 5.500" strokeWidth="5.800" />
            <path d="M17.500 45c11-2.500 22-1 31.500 5" strokeWidth="4.600" />
          </g>
        </Tile>
        <Tile id="term" a="#cfe2f2" b="#7c7a78" className="ml-[19px]" dot>
          <rect x="2.500" y="2.500" width="63" height="63" rx="13.500" fill="#000" />
          <rect x="7.500" y="8" width="53" height="52" rx="8" fill="#262626" />
          <path d="M12 13l8 5-8 5M23 25.500h10" fill="none" stroke="#f2f2f2" strokeWidth="2" />
        </Tile>
        <Tile w={64} className="ml-[22px]" dot>
          <defs>
            <linearGradient id="pyc" x1="0" y1="0" x2="1" y2="0.600">
              <stop offset="0" stopColor="#42e05a" />
              <stop offset="0.450" stopColor="#c8f24c" />
              <stop offset="1" stopColor="#ece74f" />
            </linearGradient>
            <linearGradient id="pyk" x1="0" y1="0" x2="1" y2="1">
              <stop offset="0" stopColor="#1e3a1a" />
              <stop offset="0.500" stopColor="#000" />
            </linearGradient>
          </defs>
          <rect y="2" width="64" height="64" fill="url(#pyc)" />
          <rect x="5.500" y="7.500" width="53" height="53" fill="none" stroke="#a5b43a" strokeWidth="3" opacity="0.600" />
          <rect x="8" y="10" width="48" height="48" fill="url(#pyk)" />
          <text x="12" y="34" fill="#fff" className="font-['Open_Sans',sans-serif] text-[25px] font-bold">PC</text>
          <path d="M14 50h18" stroke="#fff" strokeWidth="3.200" />
          <circle cx="57" cy="7" r="15" fill="#4ea532" />
          <path d="M50 7l5 6 9-12" fill="none" stroke="#fff" strokeWidth="4.500" />
        </Tile>
        <Tile id="chrome" a="#fbfbfb" b="#ececec" className="ml-[22px]" dot>
          <circle cx="34" cy="34" r="29.300" fill="#f4bf48" />
          <path d="M34 34L8.600 19.300A29.300 29.300 0 0 1 59.400 19.300H34z" fill="#db4b3c" />
          <path d="M8.600 19.300A29.300 29.300 0 0 0 34 63.300L46.700 41.300 34 34 21.300 41.300z" fill="#4c9f50" />
          <path d="M8.600 19.300L21.300 41.300 34 34V19.300z" fill="#db4b3c" />
          <circle cx="34" cy="33.500" r="14.300" fill="#fff" />
          <circle cx="34" cy="33.500" r="11.500" fill="#3f7de8" />
        </Tile>
        <Tile w={67} className="ml-[23px]" dot>
          <defs>
            <Grad id="javab" a="#ffffff" b="#e6e6e7" />
          </defs>
          <rect x="0.500" y="-0.500" width="66" height="69" fill="url(#javab)" stroke="#5b7a9a" strokeWidth="1" />
          <path d="M39 7c2 8-12 12-11 20 0 4 6 7 8 10 0-5-4-7-4-11 0-7 10-10 7-19zM43 18c-4 2-10 6-9 10 0 3 4 4 3 9 4-3 3-6 1-8-2-4 1-7 5-11z" fill="#e79a32" />
          <g fill="none" stroke="#557fa3" strokeWidth="2" strokeLinecap="round">
            <path d="M28 37c-5 1-11 2-9 3 6 2 20 1 26-1M45 37c9-1 8 7 0 9M22 45c4 2 14 2 19 0M24 51c4 2 12 2 15 0M20 54c-5 1-8 3-5 4 9 3 28 2 33-1M23 61c10 1 22 0 29-3" />
          </g>
        </Tile>
        <Tile id="gh" a="#873bb0" b="#5a2c86" className="ml-[21px]" dot>
          <FaGithub size={58} x="5" y="5" color="#f1edf6" />
        </Tile>
        <div className="ml-[30px] mt-[16px] h-[76px] w-[2px] bg-[#434b56]" />
        <Tile w={60} className="ml-[31px]">
          <defs>
            <linearGradient id="can" x1="0" y1="0" x2="1" y2="0">
              <stop offset="0" stopColor="#8f9396" />
              <stop offset="0.300" stopColor="#63676a" />
              <stop offset="0.600" stopColor="#84888b" />
              <stop offset="1" stopColor="#75797c" />
            </linearGradient>
          </defs>
          <path d="M1 2l8 62c1 9 41 9 42 0l8-62z" fill="url(#can)" />
          <ellipse cx="30" cy="3" rx="29.500" ry="7" fill="#54585b" stroke="#a5a9ac" strokeWidth="1.500" />
          <path d="M6 1l7-6 6 2 4-4 7 3 6-3 4 5 7 1 8 5-3 6-10-1-6 3-8-2-8 3-6-5-5 1z" fill="#e6e6e6" />
          <path d="M12 0l6 2 3-4M27-3l3 7 6-3M42-1l-4 7M20 7l6-3M46 5l6-1" stroke="#55575a" strokeWidth="1.500" fill="none" />
          <path d="M22 1l6 2-2 3-6-2z" fill="#45aeca" />
          <path d="M42 4l5 2-2 4-5-2z" fill="#c25a3b" />
          <path d="M20 22c8 4 16 4 22-2" stroke="#a5a9ab" strokeWidth="2" opacity="0.600" fill="none" />
        </Tile>
      </div>
    </div>
  );
}

export default function App() {
  return (
    <div className="relative flex h-[1800px] w-[2880px] flex-col overflow-hidden bg-[linear-gradient(90deg,#25395f_0%,#15264c_45%,#05102c_100%)]">
      <div className="absolute inset-x-0 bottom-0 h-[900px] bg-linear-to-b from-transparent to-[#040e1f] to-80%" />
      <MenuBar />
      <BackWindow />
      <FrontWindow />
      <Dock />
    </div>
  );
}
